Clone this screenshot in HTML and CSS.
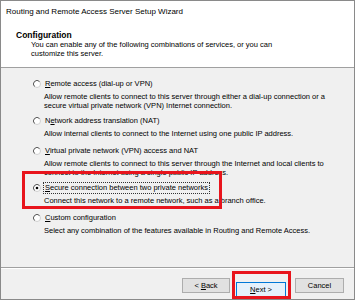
FILE: index.html
```html
<!DOCTYPE html>
<html lang="en">
<head>
<meta charset="UTF-8">
<title>Routing and Remote Access Server Setup Wizard</title>
<link rel="stylesheet" href="styles.css">
</head>
<body>

<div class="window">
    <div class="top">
        <div class="title">Routing and Remote Access Server Setup Wizard</div>
        <div class="heading">Configuration</div>
        <div class="subtitle">You can enable any of the following combinations of services, or you can<br>customize this server.</div>
    </div>

    <div class="content">
        <div class="option">
            <div class="choice">
                <svg class="radio" viewBox="0 0 8 8"><circle cx="4" cy="4" r="3.5" fill="#fff" stroke="#d0d0d0"/><path d="M6.5 1.5A3.5 3.5 0 0 0 1.5 6.5" stroke="#606060" fill="none"/></svg>
                <span class="label"><u>R</u>emote access (dial-up or VPN)</span>
            </div>
            <div class="note">Allow remote clients to connect to this server through either a dial-up connection or a<br>secure virtual private network (VPN) Internet connection.</div>
        </div>
        <div class="option">
            <div class="choice">
                <svg class="radio" viewBox="0 0 8 8"><circle cx="4" cy="4" r="3.5" fill="#fff" stroke="#d0d0d0"/><path d="M6.5 1.5A3.5 3.5 0 0 0 1.5 6.5" stroke="#606060" fill="none"/></svg>
                <span class="label">N<u>e</u>twork address translation (NAT)</span>
            </div>
            <div class="note">Allow internal clients to connect to the Internet using one public IP address.</div>
        </div>
        <div class="option spaced">
            <div class="choice">
                <svg class="radio" viewBox="0 0 8 8"><circle cx="4" cy="4" r="3.5" fill="#fff" stroke="#d0d0d0"/><path d="M6.5 1.5A3.5 3.5 0 0 0 1.5 6.5" stroke="#606060" fill="none"/></svg>
                <span class="label"><u>V</u>irtual private network (VPN) access and NAT</span>
            </div>
            <div class="note">Allow remote clients to connect to this server through the Internet and local clients to<br>connect to the Internet using a single public IP address.</div>
        </div>
        <div class="option">
            <div class="choice">
                <svg class="radio" viewBox="0 0 8 8"><circle cx="4" cy="4" r="3.5" fill="#fff" stroke="#d0d0d0"/><path d="M6.5 1.5A3.5 3.5 0 0 0 1.5 6.5" stroke="#606060" fill="none"/><circle cx="4" cy="4" r="1.3" fill="#000"/></svg>
                <span class="label focused"><u>S</u>ecure connection between two private networks</span>
            </div>
            <div class="note">Connect this network to a remote network, such as a branch office.</div>
            <div class="highlight"></div>
        </div>
        <div class="option spaced">
            <div class="choice">
                <svg class="radio" viewBox="0 0 8 8"><circle cx="4" cy="4" r="3.5" fill="#fff" stroke="#d0d0d0"/><path d="M6.5 1.5A3.5 3.5 0 0 0 1.5 6.5" stroke="#606060" fill="none"/></svg>
                <span class="label"><u>C</u>ustom configuration</span>
            </div>
            <div class="note">Select any combination of the features available in Routing and Remote Access.</div>
        </div>
    </div>

    <div class="footer">
        <button class="btn">&lt; <u>B</u>ack</button>
        <div class="next-wrap">
            <button class="btn default"><u>N</u>ext &gt;</button>
            <div class="highlight"></div>
        </div>
        <button class="btn cancel">Cancel</button>
    </div>
</div>

</body>
</html>
```

FILE: styles.css
```css
body {
    margin: 0;
    background: #fff;
    font-family: 'Liberation Sans', Arial, sans-serif;
    color: #000;
}

.window {
    width: 355px;
    height: 300px;
    box-sizing: border-box;
    border: 1px solid #8a8a8a;
    display: flex;
    flex-direction: column;
    background: #f0f0f0;
}

.top {
    background: #fff;
    border-bottom: 1px solid #a0a0a0;
    padding: 5px 0 0 5px;
    box-sizing: border-box;
    height: 67px;
}

.title {
    font-size: 8px;
    line-height: 11px;
    white-space: nowrap;
}

.heading {
    font-size: 8.5px;
    font-weight: bold;
    line-height: 10px;
    margin: 13px 0 0 10px;
}

.subtitle {
    font-size: 7.5px;
    line-height: 9px;
    margin-left: 25px;
    white-space: nowrap;
}

.content {
    flex: 1;
    padding: 11px 0 0 32px;
    display: flex;
    flex-direction: column;
    gap: 6px;
}

.option {
    position: relative;
}

.option.spaced {
    margin-top: 2px;
}

.choice {
    display: flex;
    align-items: center;
    gap: 4px;
    height: 10px;
}

.radio {
    width: 8px;
    height: 8px;
    flex: none;
}

.label, .note {
    font-size: 7.5px;
    white-space: nowrap;
}

.label {
    line-height: 10px;
}

.label.focused {
    outline: 1px dotted #333;
    outline-offset: 0;
    padding: 0 1px;
    margin-left: -1px;
}

.note {
    line-height: 9px;
    margin: 3px 0 0 11px;
}

.option .highlight {
    position: absolute;
    left: -11px;
    top: -12px;
    width: 200px;
    height: 38px;
    box-sizing: border-box;
    border: 3px solid #e8141c;
}

.footer {
    height: 32px;
    border-top: 1px solid #a0a0a0;
    box-shadow: inset 0 1px #fff;
    display: flex;
    justify-content: flex-end;
    align-items: flex-start;
    padding: 10px 10px 0 0;
    box-sizing: border-box;
}

.btn {
    width: 48px;
    height: 15px;
    padding: 0;
    font-family: 'Liberation Sans', Arial, sans-serif;
    font-size: 7.5px;
    color: #000;
    background: #e1e1e1;
    border: 1px solid #adadad;
    border-radius: 0;
}

.btn.default {
    width: 50px;
    background: #e5f1fb;
    border: 1px solid #0078d7;
}

.next-wrap {
    position: relative;
    margin: 0 9px 0 6px;
}

.next-wrap .highlight {
    position: absolute;
    left: -4px;
    top: -7px;
    width: 59px;
    height: 28px;
    box-sizing: border-box;
    border: 3px solid #e8141c;
}

.btn.cancel {
    width: 49px;
}
```
